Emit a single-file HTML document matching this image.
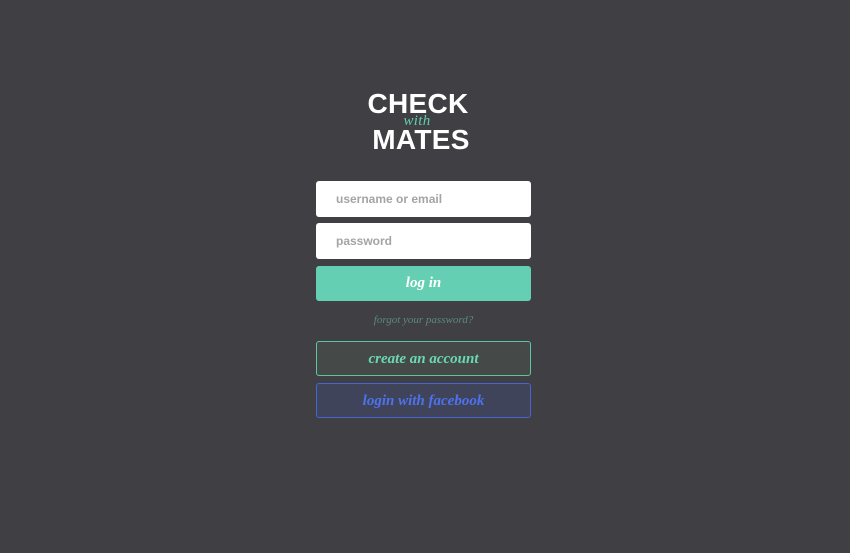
<!DOCTYPE html>
<html><head><style>
body{margin:0;width:850px;height:553px;background:#403f44;font-family:"Liberation Sans",sans-serif;position:relative;overflow:hidden}
.b{position:absolute;left:316px;width:215px;box-sizing:border-box;border-radius:3px}
.in{background:#fff;color:#a4a4a6;font-weight:bold;font-size:12px;padding-left:20px;height:36px;line-height:37px}
.s{font-family:"Liberation Serif",serif;font-style:italic;text-align:center;font-size:15px;font-weight:bold}
.logo{position:absolute;left:0;width:840px;text-align:center;color:#fff;font-weight:bold;font-size:28px;letter-spacing:0.3px;line-height:30px}
</style></head><body>
<div class="logo" style="top:89px;left:-2px">CHECK</div>
<div class="logo" style="top:112px;font-family:'Liberation Serif',serif;font-style:italic;font-weight:normal;font-size:15px;line-height:18px;color:#5fcfae;left:-3px">with</div>
<div class="logo" style="top:125px;left:1px">MATES</div>
<div class="b in" style="top:181px">username or email</div>
<div class="b in" style="top:223px">password</div>
<div class="b s" style="top:266px;height:35px;line-height:35px;background:#64cfb2;color:#fff">log in</div>
<div style="position:absolute;top:314px;left:316px;width:215px;text-align:center;font-family:'Liberation Serif',serif;font-style:italic;font-size:11px;color:#5c8a7c">forgot your password?</div>
<div class="b s" style="top:341px;height:35px;line-height:34px;border:1px solid #5cc6a3;background:#454a48;color:#6ad8b5">create an account</div>
<div class="b s" style="top:383px;height:35px;line-height:34px;border:1px solid #4565d0;background:#40445a;color:#4e72ec">login with facebook</div>
</body></html>
